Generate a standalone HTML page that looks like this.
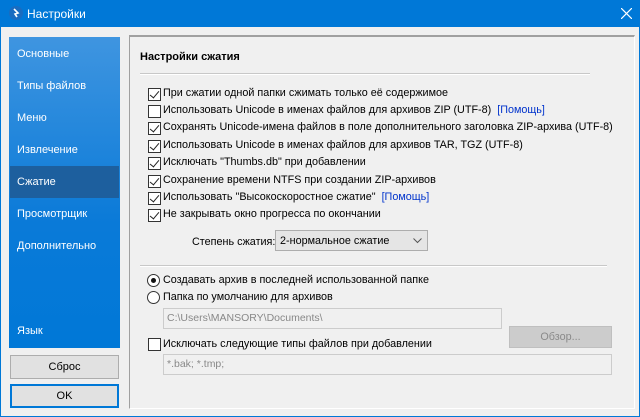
<!DOCTYPE html>
<html><head><meta charset="utf-8"><style>
*{margin:0;padding:0;box-sizing:border-box}
body{width:640px;height:417px;overflow:hidden;background:#0078d7;font-family:"Liberation Sans","DejaVu Sans",sans-serif;font-size:10.8px;color:#000;position:relative}
.win{position:absolute;left:1px;top:27px;width:638px;height:389px;background:#f0f0f0}
.title{position:absolute;left:0;top:0;width:640px;height:27px;color:#fff;font-size:12px}
.title .t{position:absolute;left:27px;top:7px}
.side{position:absolute;left:9px;top:37px;width:111px;height:311px;background:linear-gradient(#3f95e0,#0a7ad8 60%,#0078d7)}
.side .it{position:absolute;left:8px;color:#fff;font-size:11px}
.side .sel{position:absolute;left:1px;top:129px;width:109px;height:32px;background:#1d5f9e}
.btn{position:absolute;left:10px;width:109px;height:24px;background:#e1e1e1;border:1px solid #adadad;text-align:center;line-height:22px;font-size:11px}
.panel{position:absolute;left:129px;top:35px;width:506px;height:374px;border-left:1px solid #a0a0a0;border-top:2px solid #a0a0a0;border-right:1px solid #fff;border-bottom:1px solid #fff}
.a{position:absolute;white-space:nowrap}
.cb{position:absolute;width:13px;height:13px;border:1px solid #333;background:#fff}
.cb.c::after{content:"";position:absolute;left:3px;top:0px;width:4px;height:8px;border:solid #222;border-width:0 1.5px 1.5px 0;transform:rotate(40deg)}
.rb{position:absolute;width:13px;height:13px;border:1px solid #333;border-radius:50%;background:#fff}
.rb.c::after{content:"";position:absolute;left:3px;top:3px;width:5px;height:5px;border-radius:50%;background:#111}
.lnk{color:#0033cc}
.hr{position:absolute;height:2px;background:#c8c8c8;border-bottom:1px solid #fff}
.inp{position:absolute;background:#f0f0f0;border:1px solid #ccc;color:#888;padding-left:3px;line-height:18px;font-size:10.5px}
</style></head><body>
<div class="title"><svg style="position:absolute;left:9px;top:6px" width="14" height="14"><circle cx="7" cy="7" r="7" fill="#1a6cc0"/><path d="M5 3 L9 7 L6 8 L8 11" stroke="#fff" stroke-width="1.6" fill="none"/></svg><span class="t">Настройки</span>
<svg style="position:absolute;left:621px;top:8px" width="11" height="11"><path d="M0 0L11 11M11 0L0 11" stroke="#fff" stroke-width="1.2"/></svg></div>
<div class="win"></div>
<div class="side"><div class="sel"></div>
<div class="it" style="top:11px">Основные</div><div class="it" style="top:43px">Типы файлов</div><div class="it" style="top:75px">Меню</div><div class="it" style="top:107px">Извлечение</div><div class="it" style="top:139px">Сжатие</div><div class="it" style="top:171px">Просмотрщик</div><div class="it" style="top:203px">Дополнительно</div><div class="it" style="top:288px">Язык</div></div>
<div class="btn" style="top:355px">Сброс</div>
<div class="btn" style="top:384px;border:2px solid #0078d7;line-height:20px">OK</div>
<div class="panel"></div>
<div class="a" style="left:140px;top:51px;font-weight:bold;font-size:11px">Настройки сжатия</div>
<div class="hr" style="left:140px;top:73px;width:450px"></div>
<div class="cb c" style="left:148px;top:88px"></div><div class="a" style="left:163px;top:87px">При сжатии одной папки сжимать только её содержимое</div>
<div class="cb" style="left:148px;top:105px"></div><div class="a" style="left:163px;top:104px">Использовать Unicode в именах файлов для архивов ZIP (UTF-8)&nbsp; <span class="lnk">[Помощь]</span></div>
<div class="cb c" style="left:148px;top:122px"></div><div class="a" style="left:163px;top:121px">Сохранять Unicode-имена файлов в поле дополнительного заголовка ZIP-архива (UTF-8)</div>
<div class="cb c" style="left:148px;top:140px"></div><div class="a" style="left:163px;top:139px">Использовать Unicode в именах файлов для архивов TAR, TGZ (UTF-8)</div>
<div class="cb c" style="left:148px;top:157px"></div><div class="a" style="left:163px;top:156px">Исключать "Thumbs.db" при добавлении</div>
<div class="cb c" style="left:148px;top:175px"></div><div class="a" style="left:163px;top:174px">Сохранение времени NTFS при создании ZIP-архивов</div>
<div class="cb c" style="left:148px;top:192px"></div><div class="a" style="left:163px;top:191px">Использовать "Высокоскоростное сжатие"&nbsp; <span class="lnk">[Помощь]</span></div>
<div class="cb c" style="left:148px;top:209px"></div><div class="a" style="left:163px;top:208px">Не закрывать окно прогресса по окончании</div>
<div class="a" style="left:192px;top:236px">Степень сжатия:</div>
<div class="a" style="left:275px;top:230px;width:153px;height:21px;background:#e5e5e5;border:1px solid #adadad;padding:4px 0 0 4px">2-нормальное сжатие<svg style="position:absolute;right:5px;top:7px" width="9" height="6"><path d="M0.5 0.5L4.5 4.5L8.5 0.5" stroke="#555" fill="none"/></svg></div>
<div class="hr" style="left:140px;top:265px;width:467px"></div>
<div class="rb c" style="left:147px;top:274px"></div><div class="a" style="left:163px;top:274px">Создавать архив в последней использованной папке</div>
<div class="rb" style="left:147px;top:291px"></div><div class="a" style="left:163px;top:291px">Папка по умолчанию для архивов</div>
<div class="inp" style="left:163px;top:308px;width:339px;height:21px">C:\Users\MANSORY\Documents\</div>
<div class="a" style="left:509px;top:326px;width:103px;height:22px;background:#ccc;border:1px solid #bfbfbf;color:#8a8a8a;text-align:center;line-height:20px">Обзор...</div>
<div class="cb" style="left:148px;top:338px"></div><div class="a" style="left:163px;top:338px">Исключать следующие типы файлов при добавлении</div>
<div class="inp" style="left:163px;top:354px;width:449px;height:21px">*.bak; *.tmp;</div>
</body></html>
